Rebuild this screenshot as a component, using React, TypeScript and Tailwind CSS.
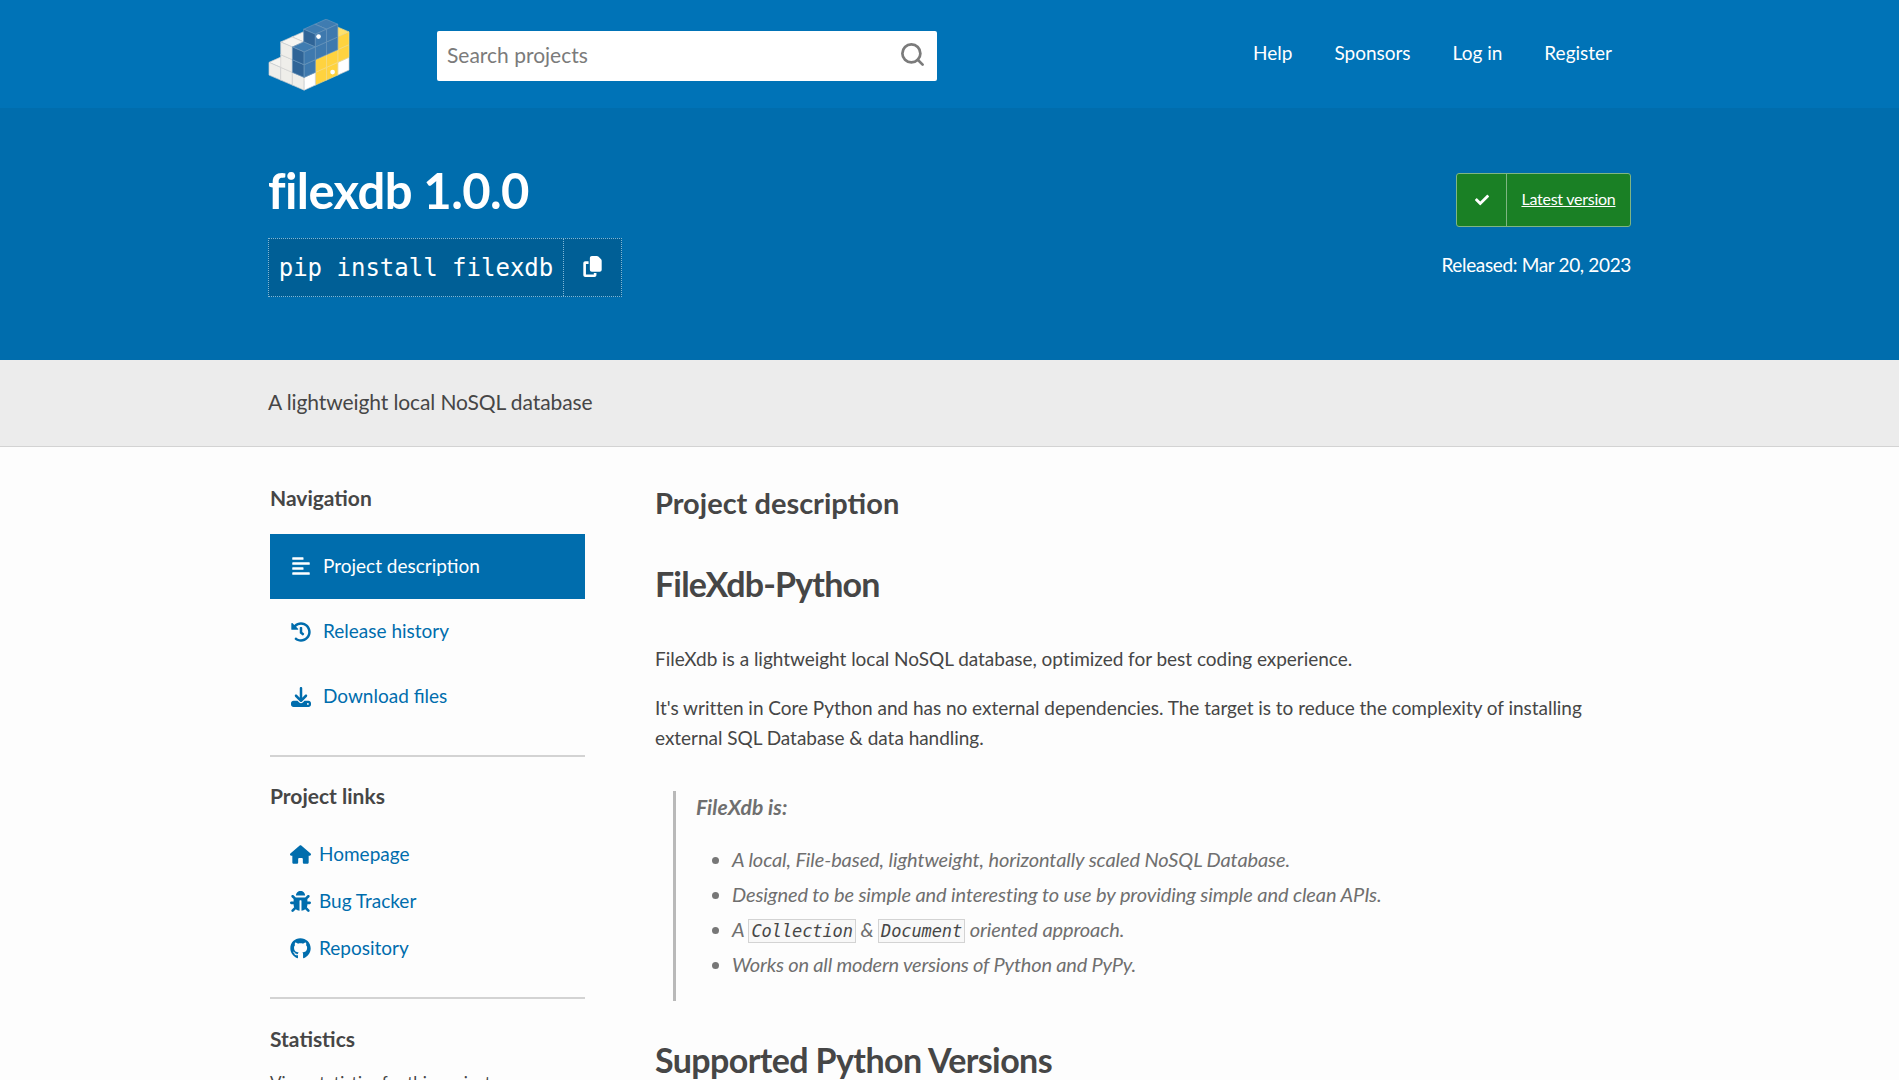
import { FaAlignLeft, FaBug, FaCheck, FaGithub, FaHistory } from "react-icons/fa";
import { FaCopy, FaDownload, FaHouse } from "react-icons/fa6";
import { Search } from "lucide-react";
import type { ReactNode } from "react";

type Tone = "white" | "blue" | "yellow";

const tones: Record<Tone, { top: string; left: string; right: string; line: string }> = {
  white: { top: "#f6f5f1", left: "#efeeea", right: "#ffffff", line: "#cfcfcf" },
  blue: { top: "#3f7cb1", left: "#2f6497", right: "#3e79ae", line: "#6c97bd" },
  yellow: { top: "#ffe16b", left: "#ffd343", right: "#ffd33f", line: "#f3dc8c" },
};

// x goes back-left, y goes back-right, z goes up
const cubes: [number, number, number, Tone][] = [
  [1, 1, 0, "white"],
  [1, 1, 1, "white"],
  [1, 1, 2, "white"],
  [2, 0, 0, "white"],
  [1, 0, 0, "white"],
  [1, 0, 1, "white"],
  [1, 0, 2, "white"],
  [0, 3, 0, "white"],
  [0, 3, 1, "yellow"],
  [0, 3, 2, "yellow"],
  [0, 2, 0, "yellow"],
  [0, 2, 1, "yellow"],
  [0, 2, 2, "blue"],
  [0, 2, 3, "blue"],
  [0, 1, 0, "yellow"],
  [0, 1, 1, "yellow"],
  [0, 1, 2, "blue"],
  [0, 1, 3, "blue"],
  [0, 0, 0, "white"],
  [0, 0, 1, "blue"],
  [0, 0, 2, "blue"],
];

const pt = (x: number, y: number, z: number) => `${135 - x * 35 + y * 33.5},${240 - (x + y) * 15 - z * 38}`;

const Logo = () => (
  <svg viewBox="27 28 245 214" width="82" height="72" className="shrink-0">
    {[...cubes]
      .sort((a, b) => b[0] + b[1] - (a[0] + a[1]) || a[2] - b[2])
      .map(([x, y, z, tone]) => (
        <g key={`${x}-${y}-${z}`} stroke={tones[tone].line} strokeWidth="2" strokeLinejoin="round">
          <polygon
            fill={tones[tone].top}
            points={`${pt(x, y, z + 1)} ${pt(x + 1, y, z + 1)} ${pt(x + 1, y + 1, z + 1)} ${pt(x, y + 1, z + 1)}`}
          />
          <polygon
            fill={tones[tone].left}
            points={`${pt(x, y, z)} ${pt(x + 1, y, z)} ${pt(x + 1, y, z + 1)} ${pt(x, y, z + 1)}`}
          />
          <polygon
            fill={tones[tone].right}
            points={`${pt(x, y, z)} ${pt(x, y + 1, z)} ${pt(x, y + 1, z + 1)} ${pt(x, y, z + 1)}`}
          />
        </g>
      ))}
    <circle cx="178" cy="80" r="7" fill="#fff" />
    <circle cx="220" cy="186" r="7" fill="#fff" />
  </svg>
);

const SideTitle = ({ children }: { children: ReactNode }) => (
  <h3 className="text-[21px] leading-[26px] font-bold text-[#464646]">{children}</h3>
);

const NavRow = ({ icon, label, active }: { icon: ReactNode; label: string; active?: boolean }) => (
  <a
    className={`flex h-[65px] items-center pl-[21px] text-[19px] ${
      active ? "bg-[#006dad] pb-[1px] text-white" : "text-[#006dad]"
    }`}
  >
    <span className="flex w-[32px] justify-start text-[20px]">{icon}</span>
    {label}
  </a>
);

const LinkRow = ({ icon, label }: { icon: ReactNode; label: string }) => (
  <a className="flex h-[47px] items-center pl-[20px] text-[19px] text-[#006dad]">
    <span className="flex w-[29px] justify-start text-[21px]">{icon}</span>
    {label}
  </a>
);

const Code = ({ children }: { children: string }) => (
  <code className="border border-[#d3d3d3] bg-[#f8f8f8] px-[2px] py-[1px] font-['DejaVu_Sans_Mono',monospace] text-[17px] leading-none font-normal text-[#464646]">
    {children}
  </code>
);

export default function App() {
  return (
    <div className="h-[1080px] overflow-hidden bg-[#fdfdfd] font-['Lato',sans-serif] text-[#464646]">
      <header className="h-[108px] bg-[#0073b7]">
        <div className="mx-auto flex w-[1363px] items-start">
          <div className="mt-[19px]">
            <Logo />
          </div>
          <div className="ml-[87px] mt-[31px] flex h-[50px] w-[500px] items-center justify-between rounded-[2px] bg-white pl-[10px] pr-[11px]">
            <span className="mb-[3px] text-[21px] text-[#7b7b7b]">Search projects</span>
            <Search size={27} strokeWidth={2.4} className="mb-[3px] text-[#7b7b7b]" />
          </div>
          <nav className="ml-[316px] mt-[39px] flex gap-[42px] text-[19px] leading-[28px] text-white">
            <a>Help</a>
            <a>Sponsors</a>
            <a>Log in</a>
            <a>Register</a>
          </nav>
        </div>
      </header>

      <section className="h-[252px] bg-[#006dad] text-white">
        <div className="mx-auto flex w-[1363px] justify-between">
          <div>
            <h1 className="mt-[54px] text-[49px] leading-[56px] font-bold tracking-[-0.6px]">filexdb 1.0.0</h1>
            <div className="mt-[20px] flex h-[59px] w-[354px] border border-dotted border-[#7fb6d6] bg-[#005f96]">
              <span className="flex w-[295px] items-center justify-center border-r border-dotted border-[#7fb6d6] font-['DejaVu_Sans_Mono',monospace] text-[24px]">
                pip install filexdb
              </span>
              <span className="flex flex-1 items-center justify-center pb-[3px] text-[21px]">
                <FaCopy />
              </span>
            </div>
          </div>
          <div className="flex flex-col items-end">
            <div className="mt-[65px] flex h-[54px] w-[175px] rounded-[3px] border border-[#7fb583] bg-[#1a8025]">
              <span className="flex w-[50px] items-center justify-center border-r border-[#7fb583] text-[14px]">
                <FaCheck />
              </span>
              <a className="flex flex-1 items-center justify-center pb-[2px] text-[16px] tracking-[-0.25px] underline">Latest version</a>
            </div>
            <p className="mt-[25px] text-[19px] leading-[26px] tracking-[-0.35px]">Released: Mar 20, 2023</p>
          </div>
        </div>
      </section>

      <section className="h-[87px] border-b border-[#d3d3d3] bg-[#ececec]">
        <p className="mx-auto w-[1363px] pt-[28px] text-[21px] leading-[28px] tracking-[-0.1px]">A lightweight local NoSQL database</p>
      </section>

      <div className="mx-auto flex w-[1363px] pt-[38px]">
        <aside className="ml-[2px] w-[315px] shrink-0">
          <SideTitle>Navigation</SideTitle>
          <div className="mt-[23px]">
            <NavRow active icon={<FaAlignLeft />} label="Project description" />
            <NavRow icon={<FaHistory />} label="Release history" />
            <NavRow icon={<FaDownload />} label="Download files" />
          </div>
          <div className="mt-[26px] border-t-2 border-[#d3d3d3]" />
          <div className="mt-[26px]">
            <SideTitle>Project links</SideTitle>
          </div>
          <div className="mt-[22px]">
            <LinkRow icon={<FaHouse />} label="Homepage" />
            <LinkRow icon={<FaBug />} label="Bug Tracker" />
            <LinkRow icon={<FaGithub />} label="Repository" />
          </div>
          <div className="mt-[25px] border-t-2 border-[#d3d3d3]" />
          <div className="mt-[27px]">
            <SideTitle>Statistics</SideTitle>
          </div>
          <p className="mt-[18px] text-[17px] text-[#464646]">View statistics for this project</p>
        </aside>

        <main className="ml-[70px] w-[976px]">
          <h2 className="-mt-[1px] text-[29px] leading-[38px] font-bold">Project description</h2>
          <h1 className="mt-[39px] text-[34px] leading-[46px] font-bold tracking-[-0.85px]">FileXdb-Python</h1>
          <p className="mt-[37px] text-[19px] leading-[30px] tracking-[-0.03px]">
            FileXdb is a lightweight local NoSQL database, optimized for best coding experience.
          </p>
          <p className="mt-[19px] text-[19px] leading-[30px] tracking-[-0.03px]">
            It's written in Core Python and has no external dependencies. The target is to reduce the complexity of installing external SQL Database &amp; data handling.
          </p>
          <blockquote className="mt-[38px] ml-[18px] border-l-[3px] border-[#b9b9b9] pl-[20px] pt-[1px] pb-[22px] italic text-[#6f6f6f]">
            <p className="text-[21px] leading-[30px] font-bold tracking-[0.1px]">FileXdb is:</p>
            <ul className="mt-[22px] ml-[36px] list-disc space-y-[5px] text-[20px] leading-[30px] tracking-[-0.1px] marker:text-[#777]">
              <li>A local, File-based, lightweight, horizontally scaled NoSQL Database.</li>
              <li>Designed to be simple and interesting to use by providing simple and clean APIs.</li>
              <li>
                A <Code>Collection</Code> &amp; <Code>Document</Code> oriented approach.
              </li>
              <li className="tracking-[-0.2px]">Works on all modern versions of Python and PyPy.</li>
            </ul>
          </blockquote>
          <h2 className="mt-[36px] text-[34px] leading-[46px] font-bold tracking-[-0.6px]">Supported Python Versions</h2>
        </main>
      </div>
    </div>
  );
}
